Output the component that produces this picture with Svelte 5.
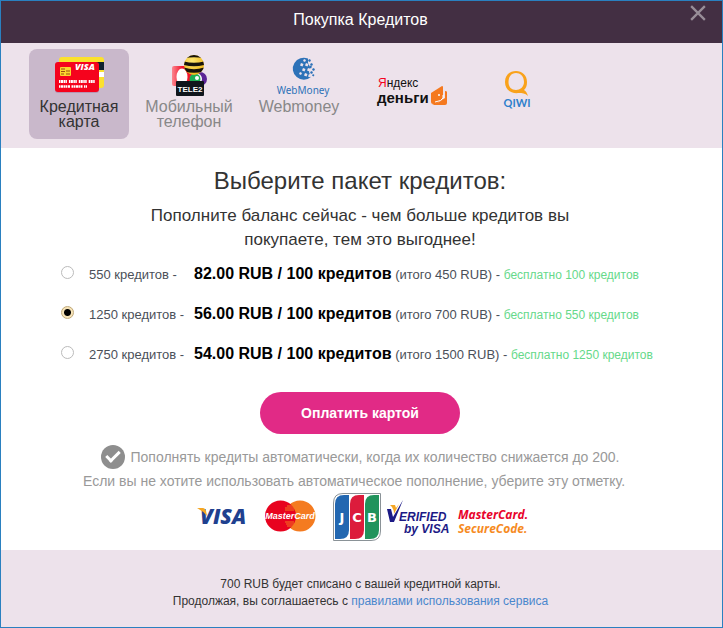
<script lang="ts">
  type Plan = { id: string; credits: number; price: string; total: number; free: number };

  const plans: Plan[] = [
    { id: 'p550', credits: 550, price: '82.00', total: 450, free: 100 },
    { id: 'p1250', credits: 1250, price: '56.00', total: 700, free: 550 },
    { id: 'p2750', credits: 2750, price: '54.00', total: 1500, free: 1250 }
  ];

  const methods = [
    { id: 'card', label: 'Кредитная карта' },
    { id: 'phone', label: 'Мобильный телефон' },
    { id: 'webmoney', label: 'Webmoney' },
    { id: 'yandex', label: '' },
    { id: 'qiwi', label: '' }
  ];

  let method = $state('card');
  let selected = $state('p1250');
  let autoRefill = $state(true);

  let plan = $derived(plans.find((p) => p.id === selected) ?? plans[0]);
</script>

{#snippet cardIcon()}
  <svg class="icon" viewBox="0 0 100 50" aria-hidden="true">
    <rect x="30" y="8" width="45" height="31" rx="3" fill="#fbe12d" />
    <rect x="66" y="13" width="9" height="8" fill="#10222f" />
    <rect x="69" y="23" width="6" height="5" fill="#fff" />
    <rect x="26" y="14" width="44" height="30" rx="3" fill="#b795b3" />
    <rect x="26" y="13" width="44" height="30" rx="3" fill="#f5031d" />
    <rect x="31" y="18" width="11" height="9" rx="1" fill="#fbd62d" />
    <path d="M32 20h4m1 2h4M32 22.500h4m1 2.500h4M32 25h3" stroke="#9d4a12" stroke-width="1" />
    <text x="46" y="21" class="visa-small">VISA</text>
    <path d="M30 32.500h36" stroke="#fff" stroke-width="3" stroke-dasharray="1.500 .5 2 .5 1.500 .4 1.500 2" />
    <path d="M30 37.500h28" stroke="#fff" stroke-width="2.500" stroke-dasharray="1.500 .5 2 .5 2 .4 1.500 .6 2 1.500" />
  </svg>
{/snippet}

{#snippet phoneIcon()}
  <svg class="icon" viewBox="0 0 100 50" aria-hidden="true">
    <defs>
      <linearGradient id="mts" x1="0" x2="1">
        <stop offset="0" stop-color="#fb8790" />
        <stop offset=".5" stop-color="#f2152c" />
      </linearGradient>
      <radialGradient id="bee" cx=".4" cy=".3" r=".7">
        <stop offset="0" stop-color="#ffe873" />
        <stop offset="1" stop-color="#eeb517" />
      </radialGradient>
      <clipPath id="bee-clip"><circle cx="55" cy="16" r="10" /></clipPath>
    </defs>
    <rect x="33" y="17" width="20" height="20" rx="2" fill="url(#mts)" />
    <ellipse cx="43" cy="28" rx="5.500" ry="8.500" fill="#fff" />
    <circle cx="61" cy="30" r="7" fill="#5c2596" />
    <circle cx="57" cy="30" r="6" fill="#fff" />
    <circle cx="56" cy="30" r="5.500" fill="#1eae55" />
    <circle cx="58" cy="29" r="2" fill="#fff" />
    <g clip-path="url(#bee-clip)">
      <rect x="45" y="6" width="20" height="20" fill="url(#bee)" />
      <path d="M44 8q11-3 22 0M44 14q11 3 22 0M44 20q11 4 22 0" fill="none" stroke="#17130b" stroke-width="3.500" />
    </g>
    <rect x="37" y="32" width="28" height="15" rx="1" fill="#10161c" />
    <text x="51" y="43" class="tele2">TELE2</text>
  </svg>
{/snippet}

{#snippet webmoneyIcon()}
  <svg class="icon" viewBox="0 0 100 50" aria-hidden="true">
    <path d="M59 9.500A11 11 0 1 0 62 28l-2-5 1-5-2-4z" fill="#2d72b8" />
    <path
      fill="#ede2eb"
      d="M55 10l2 1-1 2-2-1zM52 14l2.500 1-1 2.500-2.500-1zM57 14l2.500 1-1 2.500-2.500-1zM54 19l2.500 1-1 2.500-2.500-1zM59 19l2.500 1-1 2.500-2.500-1zM51 23l2 1-1 2-2-1zM56 24l2.500 1-1 2.500-2.500-1zM60 25l2.500 1-1 2.500-2.500-1z"
    />
    <path
      fill="#2d72b8"
      d="M60 10l2 1-1 2-2-1zM62 14l2 1-1 2-2-1zM64 19l2 1-1 2-2-1zM61 16.500l2 1-1 2-2-1zM62 22l2 1-1 2-2-1zM64 25l1.500 1-1 1.500-1.500-1z"
    />
    <text x="54" y="45" class="wm">WebMoney</text>
  </svg>
{/snippet}

{#snippet yandexIcon()}
  <svg class="icon tall" viewBox="0 0 100 60" role="img" aria-label="Яндекс деньги">
    <text x="19" y="38" class="ya"><tspan fill="#f5031d">Я</tspan>ндекс</text>
    <text x="18" y="54" class="ya money">деньги</text>
    <path d="M72 44l11-7q1 0 1 1v12l-7 5h-3q-2 0-2-2z" fill="#f5791f" />
    <path d="M86 42q2 0 2 1v11q0 2-2 2H73l7-3 6-4z" fill="#f5791f" />
    <path d="M76 53q7-1 8-4v-3" fill="none" stroke="#fff" stroke-width="1" />
    <circle cx="80" cy="46" r="1" fill="#fff" />
  </svg>
{/snippet}

{#snippet qiwiIcon()}
  <svg class="icon tall" viewBox="0 0 100 60" role="img" aria-label="QIWI">
    <path
      fill="#f9a21b"
      fill-rule="evenodd"
      d="M47 22c6 0 11 4 11 11 0 4-1 6-3 8 2 1 3 3 4 6-3-3-6-3-9-3-9 1-14-4-14-11s5-11 11-11zm0 2c-5 0-7.500 4-7.500 9s3 8 7.500 8c4 0 8-3 8-8 0-6-4-9-8-9z"
    />
    <text x="48" y="58" class="qiwi">QIWI</text>
  </svg>
{/snippet}

<div class="dialog" role="dialog" aria-labelledby="title">
  <header>
    <h1 id="title">Покупка Кредитов</h1>
    <button type="button" class="close" aria-label="Закрыть">
      <svg viewBox="0 0 14 14" aria-hidden="true">
        <path d="M1 1l12 12M13 1L1 13" />
      </svg>
    </button>
  </header>

  <nav class="methods">
    {#each methods as m (m.id)}
      <button type="button" class="method" class:active={method === m.id} onclick={() => (method = m.id)}>
        {#if m.id === 'card'}
          {@render cardIcon()}
        {:else if m.id === 'phone'}
          {@render phoneIcon()}
        {:else if m.id === 'webmoney'}
          {@render webmoneyIcon()}
        {:else if m.id === 'yandex'}
          {@render yandexIcon()}
        {:else}
          {@render qiwiIcon()}
        {/if}
        {#if m.label}<span>{m.label}</span>{/if}
      </button>
    {/each}
  </nav>

  <main>
    <h2>Выберите пакет кредитов:</h2>
    <p class="lead">Пополните баланс сейчас - чем больше кредитов вы покупаете, тем это выгоднее!</p>

    <div class="plans">
      {#each plans as p (p.id)}
        <label class="plan">
          <input type="radio" name="plan" value={p.id} bind:group={selected} />
          <span class="credits">{p.credits} кредитов -</span>
          <span class="details">
            <b>{p.price} RUB / 100 кредитов</b>
            (итого {p.total} RUB) - <span class="free">бесплатно {p.free} кредитов</span>
          </span>
        </label>
      {/each}
    </div>

    <button type="button" class="pay">Оплатить картой</button>

    <div class="refill">
      <label>
        <input type="checkbox" bind:checked={autoRefill} />
        Пополнять кредиты автоматически, когда их количество снижается до 200.
      </label>
      <p>Если вы не хотите использовать автоматическое пополнение, уберите эту отметку.</p>
    </div>

    <div class="logos">
      <svg width="62" height="48" viewBox="0 0 62 48" aria-hidden="true">
        <text x="3" y="31" class="visa">VISA</text>
        <path d="M0 15h6q2 0 3 3l1 5q-4-5-10-8z" fill="#f5a623" />
      </svg>
      <svg width="62" height="48" viewBox="0 0 62 48" aria-hidden="true">
        <circle cx="35" cy="23" r="15.500" fill="#f47b20" />
        <circle cx="15.500" cy="23" r="15.500" fill="#e8031f" />
        <path d="M22 13h7M20 15h9M20 17h9M20 29h9M21 31h8M22 33h6" stroke="#f47b20" stroke-width="1" />
        <text x="25" y="26" class="mc">MasterCard</text>
      </svg>
      <svg width="48" height="48" viewBox="0 0 48 48" aria-hidden="true">
        <path d="M10 .5h37.500V38q0 9.500-9.500 9.500H.5V10Q.5.5 10 .5z" fill="#fff" stroke="#8a9297" />
        <path d="M11 2h5v35q0 9-9 9H2V11q0-9 9-9z" fill="#2267b1" />
        <path d="M26 2h5v35q0 9-9 9h-5V11q0-9 9-9z" fill="#dc1c3c" />
        <path d="M41 2h5v35q0 9-9 9h-5V11q0-9 9-9z" fill="#21935c" />
        <text x="9" y="29" class="jcb">J</text>
        <text x="24" y="29" class="jcb">C</text>
        <text x="39" y="29" class="jcb">B</text>
      </svg>
      <svg width="64" height="48" viewBox="0 0 64 48" aria-hidden="true">
        <text x="12" y="28" class="vbv">ERIFIED</text>
        <text x="17" y="40" class="vbv">by VISA</text>
        <path d="M0 16h4l2 8 10-17-9 22H3z" fill="#1c1a86" />
        <path d="M3 12h5l1 3 3-4-5 10q0-6-4-9z" fill="#f5a623" />
      </svg>
      <svg width="73" height="48" viewBox="0 0 73 48" aria-hidden="true">
        <text x="1" y="26" class="sc" fill="#e8032b">MasterCard.</text>
        <text x="1" y="40" class="sc" fill="#f68b1f">SecureCode.</text>
      </svg>
    </div>
  </main>

  <footer>
    <p>{plan.total} RUB будет списано с вашей кредитной карты.</p>
    <p>Продолжая, вы соглашаетесь с <a href="#terms">правилами использования сервиса</a></p>
  </footer>
</div>

<style>
  :global(body) {
    margin: 0;
  }

  .dialog {
    box-sizing: border-box;
    min-height: 100vh;
    display: flex;
    flex-direction: column;
    border: 1px solid #2a80c0;
    background: #fff;
    color: #333;
    font-family: 'Liberation Sans', Arial, sans-serif;
  }

  h1,
  h2,
  p {
    margin: 0;
    font-weight: normal;
  }

  button {
    border: 0;
    padding: 0;
    font-family: inherit;
    cursor: pointer;
  }

  header {
    position: relative;
    padding: 7px 42px 11px 40px;
    background: #432f43;
    text-align: center;
  }

  h1 {
    color: #fff;
    font-size: 16px;
    line-height: 24px;
  }

  .close {
    position: absolute;
    top: 4px;
    right: 16px;
    width: 16px;
    height: 16px;
    background: none;
  }

  .close svg {
    display: block;
    width: 16px;
    height: 16px;
  }

  .close path {
    stroke: #988e98;
    stroke-width: 2;
  }

  .methods {
    display: flex;
    gap: 10px;
    padding: 6px 28px 9px;
    background: #ede2eb;
  }

  .method {
    display: flex;
    flex-direction: column;
    align-items: center;
    width: 100px;
    height: 90px;
    border-radius: 8px;
    background: none;
    color: #888;
    font-size: 16px;
    line-height: 15px;
  }

  .method.active {
    background: #c9b8cb;
    color: #333;
  }

  .icon {
    width: 100px;
    height: 50px;
  }

  .icon.tall {
    height: 60px;
  }

  .visa-small {
    fill: #fff;
    font: italic 800 9px 'Open Sans', sans-serif;
  }

  .tele2 {
    fill: #fff;
    font: bold 8px 'Liberation Sans', sans-serif;
    text-anchor: middle;
  }

  .wm {
    fill: #2d72b8;
    font: 10px 'Noto Sans', sans-serif;
    text-anchor: middle;
  }

  .ya {
    fill: #111;
    font: 12px 'Liberation Sans', sans-serif;
  }

  .ya.money {
    font-size: 15px;
    font-weight: bold;
  }

  .qiwi {
    fill: #2d80cc;
    font: bold 11px Lato, sans-serif;
    text-anchor: middle;
  }

  main {
    flex: 1;
    display: flex;
    flex-direction: column;
    align-items: center;
    padding: 15px 23px 8px 20px;
  }

  h2 {
    font-size: 24px;
    line-height: 36px;
  }

  .lead {
    max-width: 440px;
    margin: 5px 0 2px;
    font-size: 17px;
    line-height: 24px;
    text-align: center;
  }

  .plans {
    align-self: stretch;
    padding: 0 40px;
  }

  .plan {
    display: flex;
    align-items: center;
    height: 40px;
    color: #4b5059;
    font-size: 13px;
    white-space: nowrap;
    cursor: pointer;
  }

  .plan input {
    appearance: none;
    box-sizing: border-box;
    width: 13px;
    height: 13px;
    margin: 0 15px 4px 0;
    border: 1px solid #bbb;
    border-radius: 50%;
    background: #fff;
  }

  .plan input:checked {
    border-color: #bfa878;
    background: radial-gradient(circle, #000 3px, #f6e3b8 4px);
  }

  .credits {
    width: 105px;
  }

  b {
    color: #000;
    font-size: 16px;
  }

  .free {
    color: #66d98a;
    font-size: 12px;
  }

  .pay {
    width: 200px;
    height: 42px;
    margin: 18px 0 11px;
    border-radius: 21px;
    background: #e12a86;
    color: #fff;
    font-size: 14px;
    font-weight: bold;
  }

  .refill {
    padding-right: 12px;
    color: #999;
    font-size: 14px;
    line-height: 24px;
    text-align: center;
  }

  .refill label {
    display: flex;
    align-items: center;
    justify-content: center;
    gap: 6px;
    padding-left: 12px;
  }

  .refill input {
    appearance: none;
    display: grid;
    place-items: center;
    width: 24px;
    height: 24px;
    margin: 0;
    border-radius: 50%;
    background: #8e8e8e;
  }

  .refill input:checked::after {
    content: '';
    width: 11px;
    height: 5px;
    margin-bottom: 4px;
    border: solid #fff;
    border-width: 0 0 3px 3px;
    transform: rotate(-45deg);
  }

  .logos {
    display: flex;
    gap: 6px;
    padding-left: 6px;
  }

  .visa {
    fill: #20408f;
    font: italic 800 21px 'Open Sans', sans-serif;
  }

  .mc {
    fill: #fff;
    font: italic bold 9px 'Liberation Sans', sans-serif;
    text-anchor: middle;
  }

  .jcb {
    fill: #fff;
    font: bold 13px 'DejaVu Sans', sans-serif;
    text-anchor: middle;
  }

  .vbv {
    fill: #1c1a86;
    font: italic bold 12px 'Liberation Sans', sans-serif;
  }

  .sc {
    font: italic bold 12px 'Open Sans', sans-serif;
  }

  footer {
    padding: 26px 22px 17px 20px;
    background: #ede2eb;
    font-size: 12px;
    line-height: 17px;
    text-align: center;
  }

  a {
    color: #4a87cd;
    text-decoration: none;
  }
</style>
